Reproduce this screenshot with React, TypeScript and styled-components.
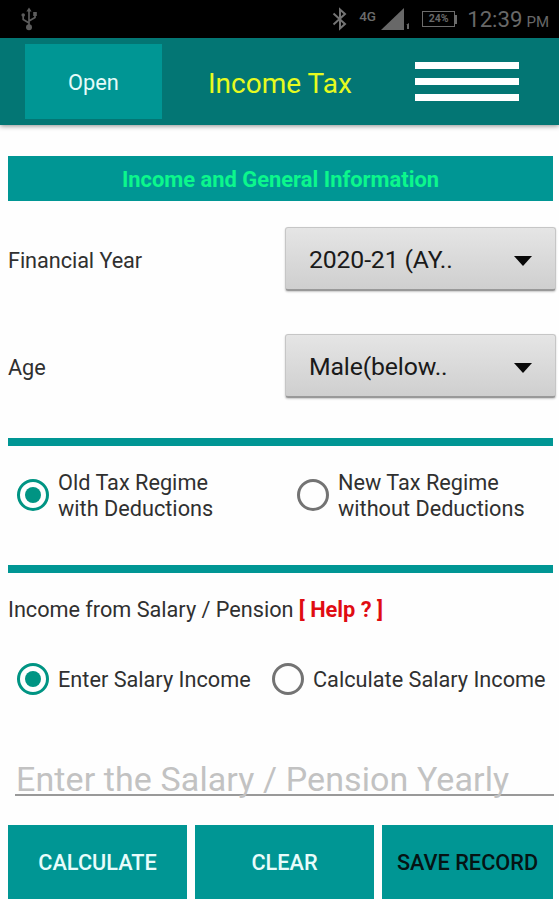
import React from "react";
import styled, { createGlobalStyle } from "styled-components";

const teal = "#009694";
const tealDark = "#037674";

const GlobalStyle = createGlobalStyle`
  * { box-sizing: border-box; }
  body { margin: 0; background: #fefefe; }
  button, input { font-family: Roboto, sans-serif; }
`;

const Screen = styled.div`
  width: 559px;
  height: 900px;
  display: flex;
  flex-direction: column;
  overflow: hidden;
  background: #fefefe;
  color: #303030;
  font: 400 21.7px/26px Roboto, sans-serif;
`;

const StatusBar = styled.div`
  height: 38px;
  flex: none;
  display: flex;
  align-items: center;
  justify-content: space-between;
  padding: 0 10px 0 20px;
  background: #000;
  color: #686868;
`;

const StatusIcons = styled.div`
  display: flex;
  align-items: center;
  height: 38px;
`;

const StatusGlyph = styled.svg<{ $gap?: number }>`
  display: block;
  flex: none;
  margin-right: ${(p) => p.$gap ?? 0}px;
`;

const Network = styled.span`
  width: 18px;
  margin-right: 4px;
  padding-bottom: 7px;
  font-size: 13.5px;
  font-weight: 500;
  line-height: 14px;
  color: #6c6c6c;
`;

const Battery = styled.div`
  width: 33px;
  height: 16px;
  margin: 0 2px 0 12px;
  border: 1.5px solid #6c6c6c;
  font-size: 10.5px;
  font-weight: 700;
  line-height: 14px;
  text-align: center;
`;

const BatteryTip = styled.div`
  width: 2px;
  height: 9px;
  margin: 0 10px 0 -2px;
  background: #6c6c6c;
`;

const Clock = styled.div`
  font-size: 22.2px;
  line-height: 26px;
  padding-top: 3px;
`;

const Meridiem = styled.span`
  margin-left: 4px;
  font-size: 15px;
`;

const Header = styled.header`
  height: 87px;
  flex: none;
  display: flex;
  align-items: center;
  padding: 0 40px 0 25px;
  background: ${tealDark};
  box-shadow: 0 1px 5px rgba(0, 0, 0, 0.45);
`;

const OpenButton = styled.button`
  width: 137px;
  height: 75px;
  margin-bottom: 1px;
  padding: 2px 0 0 0;
  border: 0;
  background: ${teal};
  color: #e4fbf9;
  font-size: 21.8px;
`;

const Title = styled.h1`
  margin: 0 0 0 46px;
  padding-top: 4px;
  flex: 1;
  font-size: 28px;
  font-weight: 400;
  line-height: 34px;
  color: #e6fa20;
`;

const MenuButton = styled.button`
  display: grid;
  gap: 9px;
  width: 104px;
  padding: 0;
  margin-bottom: 1px;
  border: 0;
  background: none;
`;

const MenuBar = styled.span`
  height: 7px;
  background: #fff;
`;

const Form = styled.main`
  display: flex;
  flex-direction: column;
  padding: 31px 6px 0 8px;
`;

const SectionTitle = styled.h2`
  height: 45px;
  margin: 0 0 25px;
  padding-top: 1px;
  background: ${teal};
  color: #0cf78c;
  font-size: 21.9px;
  font-weight: 700;
  line-height: 45px;
  text-align: center;
`;

const Field = styled.div<{ $after: number }>`
  height: 66px;
  display: flex;
  align-items: center;
  justify-content: space-between;
  margin: 0 -3px ${(p) => p.$after}px 0;
`;

const FieldLabel = styled.span`
  padding-top: 4px;
  letter-spacing: -0.07px;
`;

const Select = styled.button`
  width: 271px;
  height: 64px;
  display: flex;
  align-items: center;
  justify-content: space-between;
  padding: 2px 23px 0 23px;
  border: 1px solid #c6c6c6;
  border-bottom: 2px solid #999;
  border-radius: 3px;
  background: linear-gradient(#e5e5e5, #cfcfcf);
  box-shadow: 0 1px 2px rgba(0, 0, 0, 0.22);
  color: #1a1a1a;
  font-size: 24.8px;
  letter-spacing: -0.15px;
`;

const Caret = styled.svg`
  display: block;
  margin-top: 2px;
`;

const Divider = styled.hr`
  width: 100%;
  height: 8px;
  flex: none;
  margin: 0;
  border: 0;
  background: ${teal};
`;

const RadioRow = styled.div<{ $columns: string; $height: number }>`
  display: grid;
  grid-template-columns: ${(p) => p.$columns};
  height: ${(p) => p.$height}px;
  padding-left: 9px;
`;

const Radio = styled.label`
  height: max-content;
  display: flex;
  align-items: center;
  gap: 9px;
  line-height: 25.5px;
  white-space: nowrap;
`;

const RadioText = styled.span`
  padding-top: 2px;
`;

const Ring = styled.span<{ $on?: boolean }>`
  width: 32px;
  height: 32px;
  flex: none;
  display: grid;
  place-items: center;
  border: 3px solid ${(p) => (p.$on ? "#009483" : "#737373")};
  border-radius: 50%;

  &::after {
    content: "";
    width: 16px;
    height: 16px;
    border-radius: 50%;
    background: ${(p) => (p.$on ? "#009483" : "transparent")};
  }
`;

const IncomeLine = styled.p`
  height: 26px;
  margin: 24px 0 40px;
  letter-spacing: -0.02px;
`;

const Help = styled.strong`
  color: #e00c12;
  font-size: 21.8px;
`;

const AmountInput = styled.input`
  width: 539px;
  height: 53px;
  margin: 57px 0 20px 7px;
  padding: 0 0 0 1px;
  border: 0;
  outline: 0;
  background: linear-gradient(#999, #999) 0 42px / 100% 2px no-repeat;
  font-size: 34px;
  letter-spacing: 0.1px;

  &::placeholder { color: #c2c2c2; opacity: 1; }
`;

const Actions = styled.div`
  display: grid;
  grid-template-columns: 179px 179px 171px;
  gap: 8px;
`;

const ActionButton = styled.button<{ $dark?: boolean }>`
  height: 74px;
  padding: 0;
  border: 0;
  background: ${teal};
  color: ${(p) => (p.$dark ? "#051414" : "#e8fcfb")};
  font-size: 21.7px;
  font-weight: 500;
  white-space: nowrap;
`;

const Down = () => (
  <Caret width="18" height="10" viewBox="0 0 18 10">
    <path d="M0 0H18L9 10Z" fill="#080808" />
  </Caret>
);

const TallRadio = styled(Radio)`
  padding-top: 22px;
`;

function RegimeOption({ on, lines }: { on?: boolean; lines: [string, string] }) {
  return (
    <TallRadio>
      <Ring $on={on} />
      <RadioText>
        {lines[0]}
        <br />
        {lines[1]}
      </RadioText>
    </TallRadio>
  );
}

export default function App() {
  return (
    <Screen>
      <GlobalStyle />
      <StatusBar>
        <StatusGlyph width="18" height="24" viewBox="0 0 18 24" fill="none" stroke="#5c5c5c" strokeWidth="1.7">
          <path d="M9 3V20M9 16L3.2 12.5V8M9 14L15 10.5V7" />
          <path d="M6.4 4.4L9 .4l2.6 4Z" fill="#5c5c5c" stroke="none" />
          <circle cx="3.2" cy="8" r="1.8" fill="#5c5c5c" stroke="none" />
          <path d="M13.2 5h3.6v4h-3.6Z" fill="#5c5c5c" stroke="none" />
          <circle cx="9" cy="20.2" r="3" fill="#5c5c5c" stroke="none" />
        </StatusGlyph>
        <StatusIcons>
          <StatusGlyph $gap={11} width="16" height="24" viewBox="0 0 16 24" fill="none" stroke="#747474" strokeWidth="2">
            <path d="M1.5 6.5L13 17L8 21.5V2.5L13 7L1.5 17.5" />
          </StatusGlyph>
          <Network>4G</Network>
          <StatusGlyph width="29" height="24" viewBox="0 0 29 24" fill="#686868">
            <path d="M0 23L23 1V23Z" />
            <path d="M25 18L28 16V22H26V18Z" />
          </StatusGlyph>
          <Battery>24%</Battery>
          <BatteryTip />
          <Clock>
            12:39<Meridiem>PM</Meridiem>
          </Clock>
        </StatusIcons>
      </StatusBar>
      <Header>
        <OpenButton>Open</OpenButton>
        <Title>Income Tax</Title>
        <MenuButton aria-label="Menu">
          <MenuBar />
          <MenuBar />
          <MenuBar />
        </MenuButton>
      </Header>
      <Form>
        <SectionTitle>Income and General Information</SectionTitle>
        <Field $after={41}>
          <FieldLabel>Financial Year</FieldLabel>
          <Select>
            2020-21 (AY..
            <Down />
          </Select>
        </Field>
        <Field $after={39}>
          <FieldLabel>Age</FieldLabel>
          <Select>
            Male(below..
            <Down />
          </Select>
        </Field>
        <Divider />
        <RadioRow $columns="280px 1fr" $height={119}>
          <RegimeOption on lines={["Old Tax Regime", "with Deductions"]} />
          <RegimeOption lines={["New Tax Regime", "without Deductions"]} />
        </RadioRow>
        <Divider />
        <IncomeLine>
          Income from Salary / Pension <Help>[ Help ? ]</Help>
        </IncomeLine>
        <RadioRow $columns="255px 1fr" $height={32}>
          <Radio>
            <Ring $on />
            <RadioText>Enter Salary Income</RadioText>
          </Radio>
          <Radio>
            <Ring />
            <RadioText>Calculate Salary Income</RadioText>
          </Radio>
        </RadioRow>
        <AmountInput placeholder="Enter the Salary / Pension Yearly" />
        <Actions>
          <ActionButton>CALCULATE</ActionButton>
          <ActionButton>CLEAR</ActionButton>
          <ActionButton $dark>SAVE RECORD</ActionButton>
        </Actions>
      </Form>
    </Screen>
  );
}
